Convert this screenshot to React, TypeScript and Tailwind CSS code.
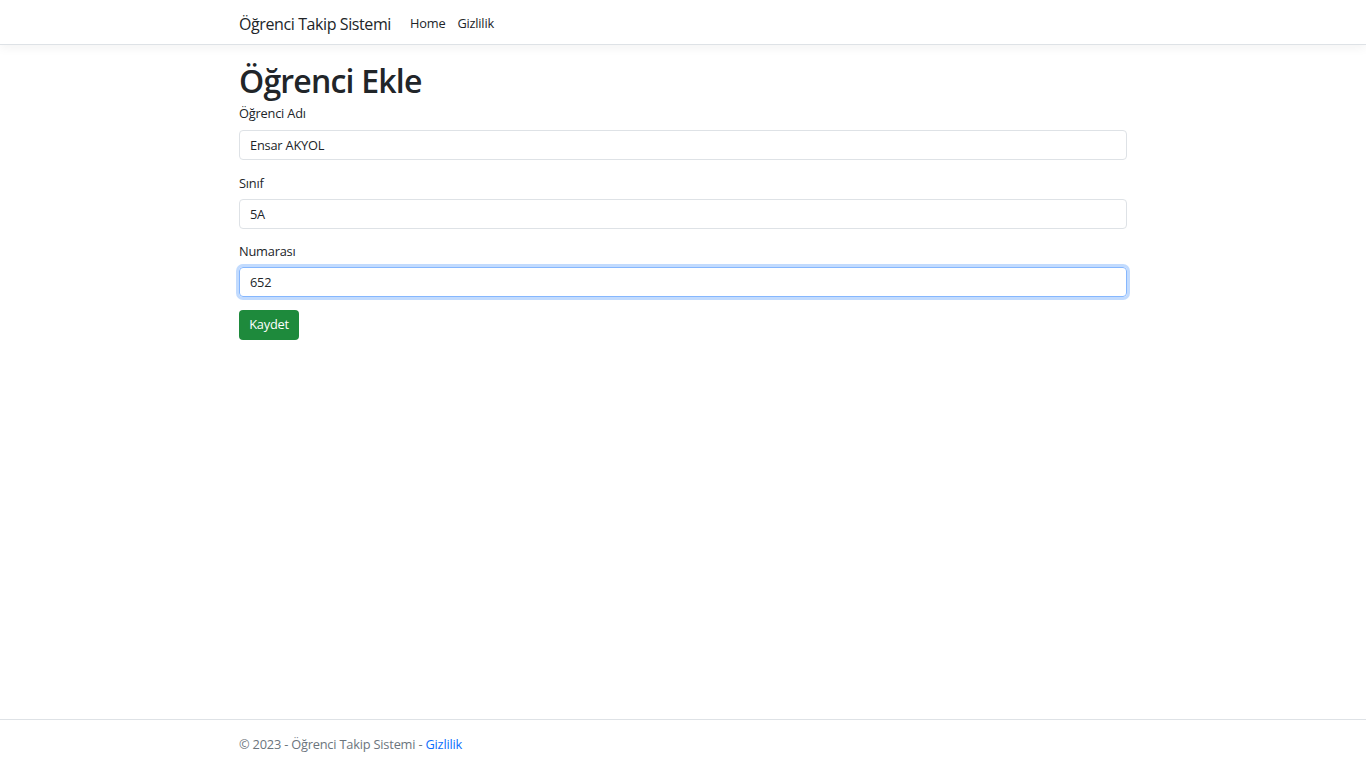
export default function App() {
  return (
    <div className="flex min-h-screen flex-col bg-white font-['Open_Sans',sans-serif] text-[12.8px] tracking-[-0.2px] text-[#212529]">
      <header className="border-b border-[#dee2e6] bg-white shadow-[0_3px_10px_rgba(0,0,0,0.05)]">
        <nav className="mx-auto flex h-[44px] w-[888px] items-center pt-[3px]">
          <a className="mr-[13px] text-[16px] leading-none tracking-[-0.4px] text-[#212529]">Öğrenci Takip Sistemi</a>
          <ul className="flex items-center">
            <li className="px-[6px] text-[12.8px]">Home</li>
            <li className="px-[6px] text-[12.8px]">Gizlilik</li>
          </ul>
        </nav>
      </header>

      <main className="mx-auto mt-[17px] w-[888px] flex-1">
        <h1 className="mb-[4px] text-[32px] font-semibold leading-[1.2] tracking-[-0.8px]">Öğrenci Ekle</h1>
        <form>
          <div className="mb-[14px]">
            <label className="mb-[6px] block leading-[1.5]">Öğrenci Adı</label>
            <input
              className="block h-[30px] w-full rounded-[4px] border border-[#dee2e6] px-[10px] text-[12.8px] tracking-[-0.2px] text-[#212529] outline-none"
              defaultValue="Ensar AKYOL"
            />
          </div>
          <div className="mb-[13px]">
            <label className="mb-[6px] block leading-[1.5]">Sınıf</label>
            <input
              className="block h-[30px] w-full rounded-[4px] border border-[#dee2e6] px-[10px] text-[12.8px] tracking-[-0.2px] text-[#212529] outline-none"
              defaultValue="5A"
            />
          </div>
          <div className="mb-[13px]">
            <label className="mb-[6px] block leading-[1.5]">Numarası</label>
            <input
              className="block h-[30px] w-full rounded-[4px] border border-[#86b7fe] px-[10px] text-[12.8px] tracking-[-0.2px] text-[#212529] shadow-[0_0_0_3px_rgba(13,110,253,0.25)] outline-none"
              defaultValue="652"
            />
          </div>
          <button
            type="button"
            className="h-[30px] w-[60px] rounded-[4px] bg-[#1e8a3c] text-[12.8px] tracking-[-0.2px] text-white"
          >
            Kaydet
          </button>
        </form>
      </main>

      <footer className="h-[49px] border-t border-[#dee2e6] text-[#6c757d]">
        <div className="mx-auto w-[888px] pt-[1px] leading-[47px]">
          © 2023 - Öğrenci Takip Sistemi - <a className="text-[#0d6efd]">Gizlilik</a>
        </div>
      </footer>
    </div>
  );
}
